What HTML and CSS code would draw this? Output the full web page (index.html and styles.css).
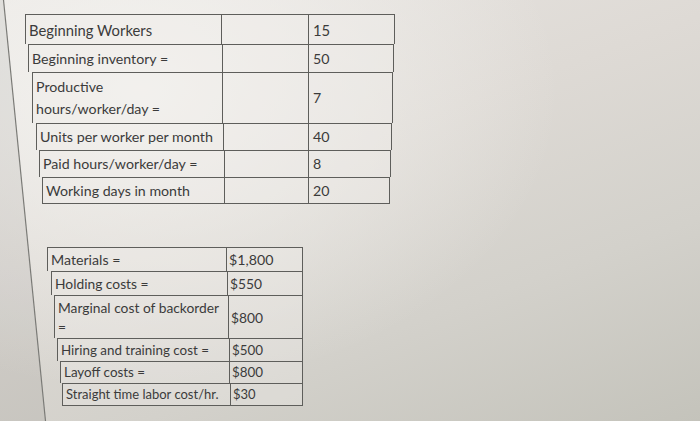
FILE: index.html
```html
<!DOCTYPE html>
<html>
<head>
<meta charset="utf-8">
<link rel="stylesheet" href="styles.css">
</head>
<body>
<div class="page">
  <svg class="edge" width="700" height="421" viewBox="0 0 700 421" aria-hidden="true">
    <polygon points="0,0 3,0 45,421 0,421" fill="rgba(0,0,0,0.06)"/>
    <line x1="3.5" y1="0" x2="45.5" y2="421" stroke="#7a7a76" stroke-width="1.2"/>
  </svg>
  <div class="sheet t1">
    <div class="row"><div class="cell c1">Beginning Workers</div><div class="cell c2"></div><div class="cell c3">15</div></div>
    <div class="row"><div class="cell c1">Beginning inventory =</div><div class="cell c2"></div><div class="cell c3">50</div></div>
    <div class="row"><div class="cell c1">Productive hours/worker/day =</div><div class="cell c2"></div><div class="cell c3">7</div></div>
    <div class="row"><div class="cell c1">Units per worker per month</div><div class="cell c2"></div><div class="cell c3">40</div></div>
    <div class="row"><div class="cell c1">Paid hours/worker/day =</div><div class="cell c2"></div><div class="cell c3">8</div></div>
    <div class="row"><div class="cell c1">Working days in month</div><div class="cell c2"></div><div class="cell c3">20</div></div>
  </div>
  <div class="sheet t2">
    <div class="row"><div class="cell c1">Materials =</div><div class="cell c3">$1,800</div></div>
    <div class="row"><div class="cell c1">Holding costs =</div><div class="cell c3">$550</div></div>
    <div class="row"><div class="cell c1">Marginal cost of backorder =</div><div class="cell c3">$800</div></div>
    <div class="row"><div class="cell c1">Hiring and training cost =</div><div class="cell c3">$500</div></div>
    <div class="row"><div class="cell c1">Layoff costs =</div><div class="cell c3">$800</div></div>
    <div class="row"><div class="cell c1">Straight time labor cost/hr.</div><div class="cell c3">$30</div></div>
  </div>
</div>
</body>
</html>
```
FILE: styles.css
```css
html {
  background: #dcdad5;
}
body {
  margin: 0;
  font-family: Lato, "Open Sans", sans-serif;
  color: #3b3b3b;
}
.page {
  position: relative;
  box-sizing: border-box;
  width: 700px;
  height: 421px;
  overflow: hidden;
  padding-top: 14px;
  background:
    radial-gradient(ellipse 420px 300px at 140px 90px, rgba(245,244,241,0.9), rgba(245,244,241,0)),
    linear-gradient(160deg, #e9e6e3 0%, #dedad5 40%, #d3d1cb 70%, #c4c3bb 100%);
}
.edge {
  position: absolute;
  left: 0;
  top: 0;
  pointer-events: none;
}
.sheet {
  position: relative;
}
.sheet .row {
  box-sizing: border-box;
  display: flex;
  margin-left: var(--l);
  width: calc(var(--r) - var(--l));
  border: 1px solid #5e5e5b;
  border-bottom: none;
  background: rgba(240,239,236,0.35);
}
.sheet .row:last-child {
  border-bottom: 1px solid #5e5e5b;
}
.cell {
  box-sizing: border-box;
  display: flex;
  align-items: center;
  padding: 0 3px;
}
.c1 {
  width: calc(var(--m) - var(--l));
  flex: none;
  padding-right: 8px;
}
.c2 {
  width: calc(307px - var(--m));
  flex: none;
  border-left: 1px solid #5e5e5b;
}
.c3 {
  flex: 1;
  border-left: 1px solid #5e5e5b;
}
.t1 {
  font-size: 14.2px;
  line-height: 22px;
}
.t1 .c3 { padding-left: 4px; }
.t1 .row:nth-child(1) { --l: 25px; --m: 220px; --r: 395px; height: 30px; font-size: 14.8px; }
.t1 .row:nth-child(2) { --l: 28px; --m: 221px; --r: 394px; height: 28px; }
.t1 .row:nth-child(3) { --l: 32px; --m: 221px; --r: 393px; height: 51px; }
.t1 .row:nth-child(4) { --l: 36px; --m: 222px; --r: 392px; height: 27px; font-size: 14.3px; }
.t1 .row:nth-child(5) { --l: 39px; --m: 223px; --r: 391px; height: 27px; }
.t1 .row:nth-child(6) { --l: 42px; --m: 223px; --r: 390px; height: 27px; }

.t2 {
  margin-top: 43px;
  font-size: 13.4px;
  line-height: 19px;
}
.t2 .row:nth-child(1) { --l: 47px; --m: 225px; --r: 303px; height: 24px; font-size: 14.2px; }
.t2 .row:nth-child(2) { --l: 51px; --m: 226px; --r: 303px; height: 24px; font-size: 13.8px; }
.t2 .row:nth-child(3) { --l: 54px; --m: 227px; --r: 303px; height: 43px; font-size: 13.8px; }
.t2 .row:nth-child(4) { --l: 57px; --m: 228px; --r: 303px; height: 23px; }
.t2 .row:nth-child(5) { --l: 60px; --m: 228px; --r: 303px; height: 22px; }
.t2 .row:nth-child(6) { --l: 62px; --m: 229px; --r: 303px; height: 23px; font-size: 13px; }
.t2 .c3 { padding-left: 2px; }
```
